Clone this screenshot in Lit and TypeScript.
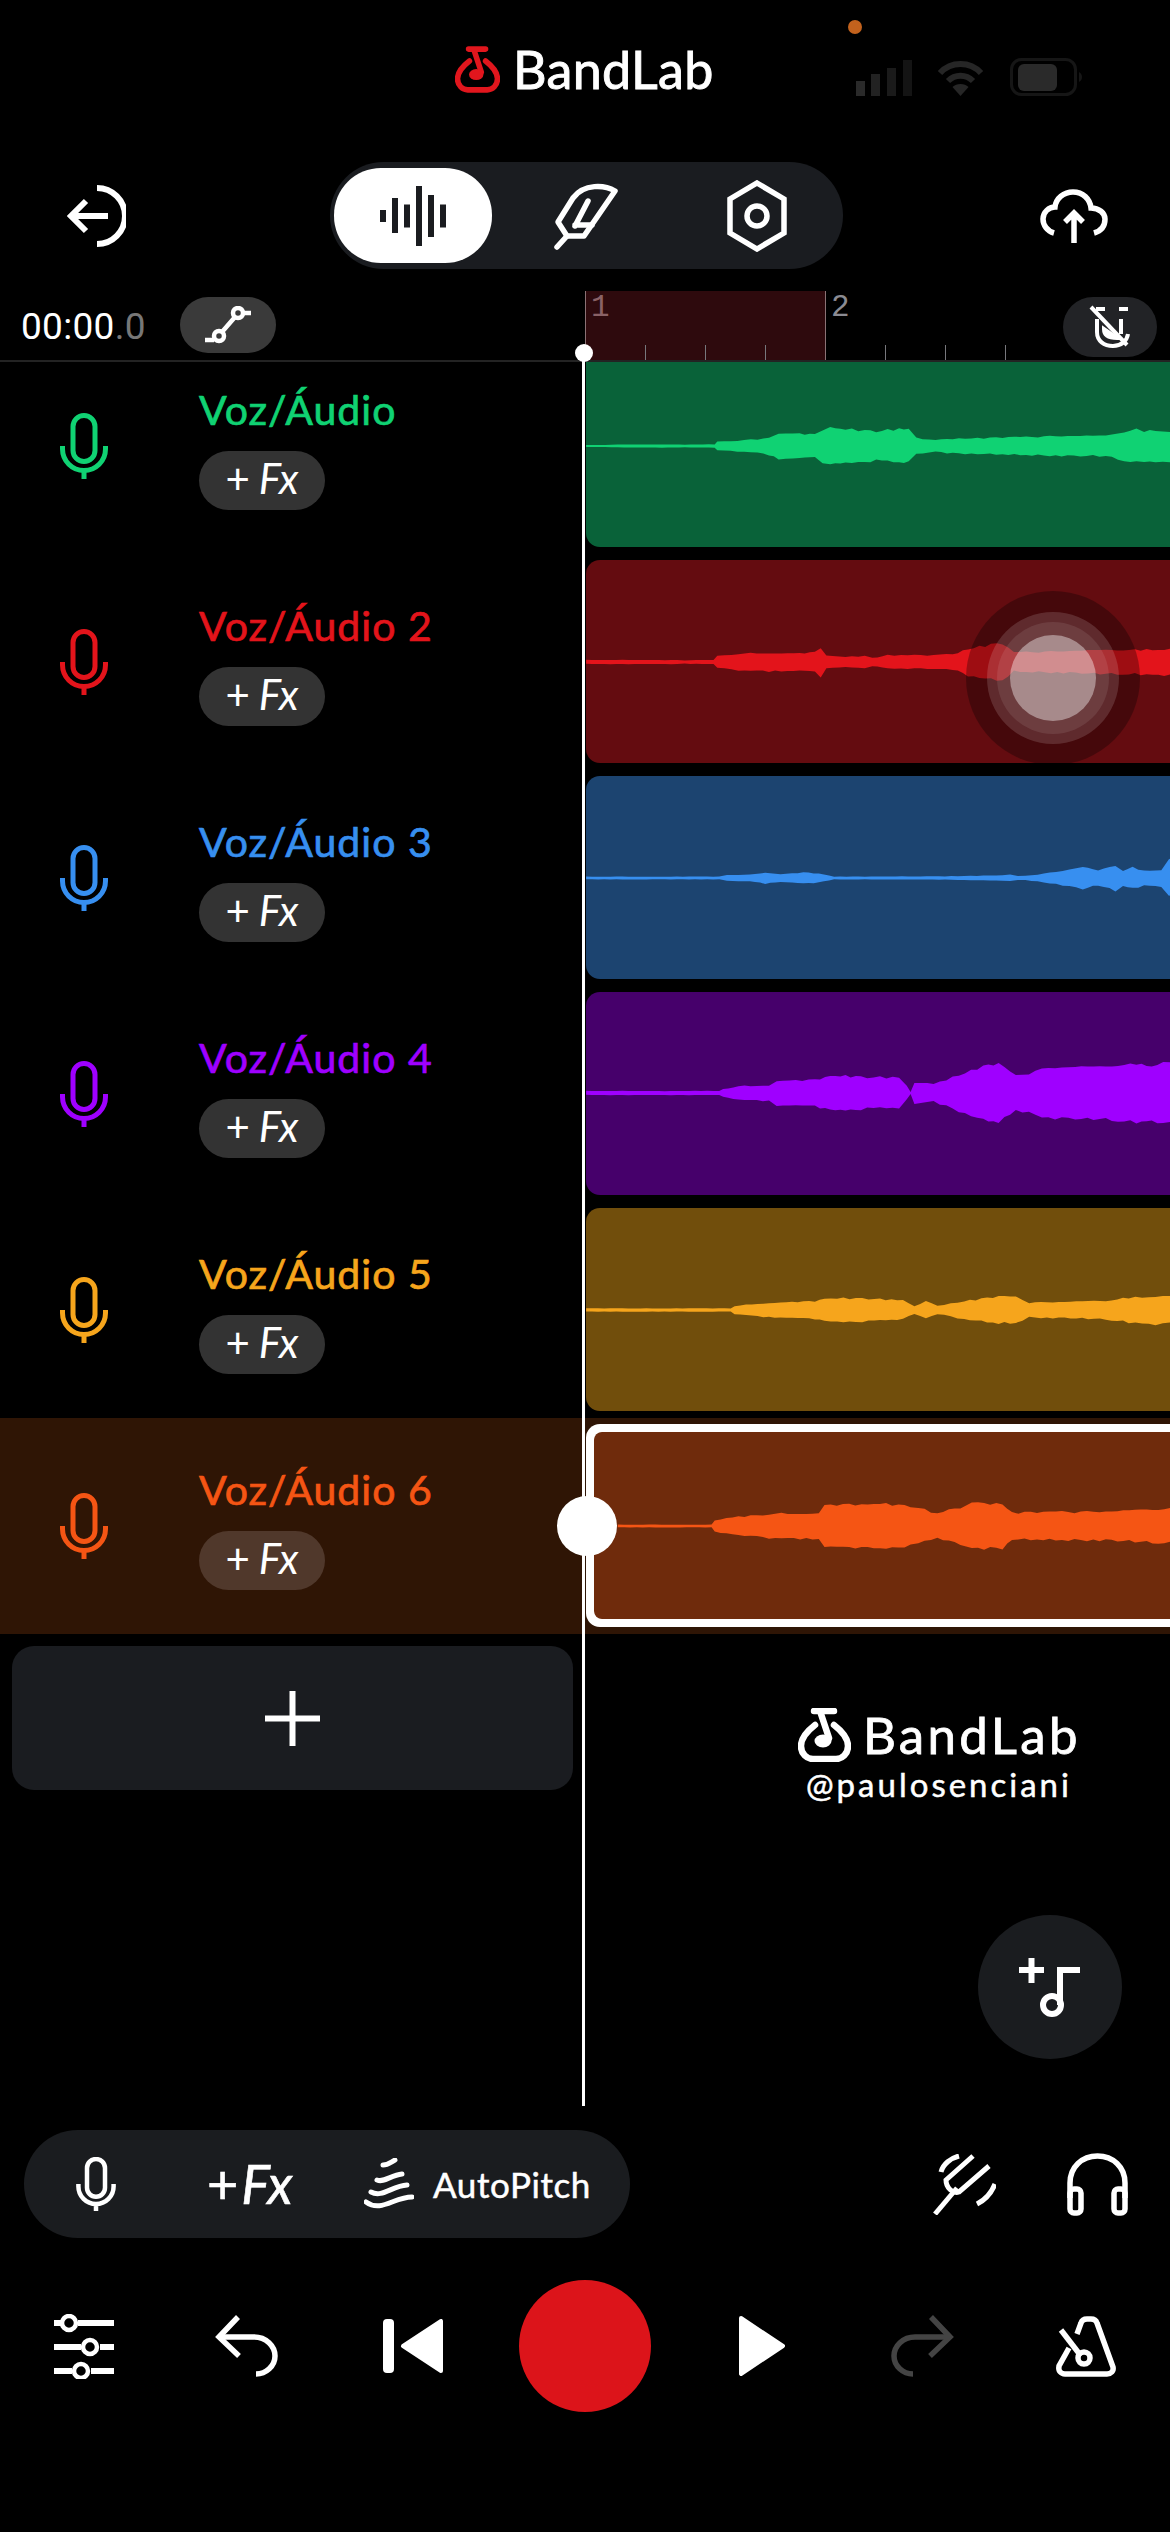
import { LitElement, html, css } from "lit";
import { customElement } from "lit/decorators.js";

type Pt = [number, number];
interface Track {
  name: string;
  color: string;
  clip: string;
  cy: number;
  pts: Pt[];
}

const TRACKS: Track[] = [
  {
    name: "Voz/Áudio", color: "#10d273", clip: "#096239", cy: 102,
    pts: [[42,3],[240,5],[300,4],[378,5],[385,13],[420,15],[490,20],[520,27],[545,40],[600,38],[640,35],[660,50],[680,58],[720,50],[770,46],[800,44],[860,50],[885,48],[905,25],[955,17],[1000,22],[1130,25],[1300,30],[1400,30],[1480,50],[1500,45],[1530,48],[1568,45]],
  },
  {
    name: "Voz/Áudio 2", color: "#e3141b", clip: "#640c10", cy: 102,
    pts: [[42,6],[280,6],[300,5],[375,6],[385,18],[440,25],[520,28],[600,27],[640,30],[655,45],[670,20],[720,15],[770,18],[790,12],[830,20],[900,20],[1000,22],[1040,40],[1100,52],[1130,55],[1160,28],[1370,35],[1430,35],[1568,39]],
  },
  {
    name: "Voz/Áudio 3", color: "#378ff0", clip: "#1c4470", cy: 102,
    pts: [[42,4],[390,4],[410,9],[470,10],[510,17],[550,12],[610,17],[650,14],[690,4],[980,5],[1130,8],[1150,10],[1170,6],[1190,6],[1270,18],[1340,33],[1380,22],[1425,37],[1445,22],[1470,32],[1500,22],[1545,25],[1565,55],[1568,55]],
  },
  {
    name: "Voz/Áudio 4", color: "#9f00ff", clip: "#46006b", cy: 101,
    pts: [[42,6],[390,6],[400,12],[440,20],[520,24],[540,38],[640,40],[680,53],[720,50],[760,48],[860,45],[880,20],[890,3],[900,33],[950,25],[1000,48],[1080,80],[1120,88],[1165,50],[1250,75],[1320,78],[1400,78],[1480,88],[1520,82],[1550,92],[1568,90]],
  },
  {
    name: "Voz/Áudio 5", color: "#f6a51c", clip: "#714e0c", cy: 102,
    pts: [[42,5],[420,5],[430,12],[520,22],[640,27],[665,35],[780,34],[870,28],[900,12],[930,25],[960,12],[1030,27],[1120,40],[1165,38],[1200,22],[1400,27],[1460,37],[1530,42],[1568,40]],
  },
  {
    name: "Voz/Áudio 6", color: "#f55514", clip: "#6f2b0c", cy: 94,
    pts: [[125,4],[370,4],[378,17],[440,27],[520,36],[650,40],[665,64],[810,67],[890,59],[910,54],[960,36],[1050,67],[1130,67],[1155,40],[1400,43],[1568,51]],
  },
];

function wobble(n: number): number {
  const v = Math.sin(n * 12.9898) * 43758.5453;
  return (v - Math.floor(v)) * 2 - 1;
}

/* Densify the outline and add a small, repeatable roughness to the envelope. */
function wavePoints(pts: Pt[], left: number, cy: number): string {
  const top: string[] = [];
  const bottom: string[] = [];
  let n = 0;
  for (let i = 0; i < pts.length; i++) {
    const [x0, h0] = pts[i];
    const next = pts[i + 1];
    const steps = next ? Math.max(1, Math.round((next[0] - x0) / 16)) : 1;
    for (let s = 0; s < steps; s++) {
      const t = s / steps;
      const zx = next ? x0 + (next[0] - x0) * t : x0;
      const zh = next ? h0 + (next[1] - h0) * t : h0;
      const h = zh / 3;
      const amp = Math.min(1.4, h * 0.09);
      const x = (570 + zx / 2.613 - left).toFixed(1);
      top.push(`${x},${(cy - h - wobble(++n) * amp).toFixed(1)}`);
      bottom.unshift(`${x},${(cy + h + wobble(++n) * amp).toFixed(1)}`);
    }
  }
  return [...top, ...bottom].join(" ");
}

const mic = () => html`<svg class="mic" viewBox="0 0 48 66" fill="none" stroke="currentColor" stroke-width="5">
  <rect x="13" y="2.5" width="22" height="46" rx="11"></rect>
  <path d="M2.5 33v3a21.5 21.5 0 0 0 43 0v-3M24 58v8"></path>
</svg>`;

const logo = (cls: string) => html`<svg class=${cls} viewBox="0 0 53 54" fill="none" stroke="currentColor" stroke-width="6.500" stroke-linecap="round">
  <path d="M17 17C8 24 3 32 3 38c0 8 6 13 12 13h23c6 0 12-5 12-13 0-6-5-14-14-21"></path>
  <path d="M16 3h20M22 3l9 27"></path>
  <ellipse cx="25" cy="33" rx="8.500" ry="6.500" fill="currentColor" stroke="none"></ellipse>
</svg>`;

@customElement("app-root")
export class AppRoot extends LitElement {
  static styles = css`
    :host {
      display: block;
      width: 1170px;
      height: 2532px;
      background: #000;
      color: #fff;
      overflow: hidden;
      font-family: "Lato", "Liberation Sans", sans-serif;
    }
    svg { display: block; flex: none; }

    .status { height: 162px; display: flex; position: relative; padding: 46px 0 0 455px; box-sizing: border-box; }
    .dot { position: absolute; left: 848px; top: 20px; width: 14px; height: 14px; border-radius: 50%; background: #c2621d; }
    .brand { display: flex; gap: 13px; align-items: flex-start; }
    .brand-mark { width: 45px; height: 47px; color: #e1161d; }
    .brand-text { font-size: 52px; line-height: 46px; letter-spacing: 0.3px; -webkit-text-stroke: 0.9px #fff; }
    .sys { margin-left: auto; padding: 12px 88px 0 0; display: flex; align-items: flex-end; height: 38px; }
    .signal { width: 57px; height: 36px; }
    .wifi { width: 47px; height: 36px; margin-left: 24px; }
    .battery { width: 72px; height: 38px; margin-left: 26px; }

    .toolbar { display: grid; grid-template-columns: 330px 513px 1fr; height: 107px; align-items: center; }
    .back { width: 60px; height: 62px; margin-left: 66px; }
    .cloud { width: 68px; height: 54px; margin-left: 197px; }
    .segment { display: grid; grid-template-columns: 158px 188px 154px; padding: 6px 0 0 4px; box-sizing: border-box; height: 107px; background: #1a1c20; border-radius: 54px; }
    .seg { height: 95px; display: flex; align-items: center; justify-content: center; border-radius: 47px; }
    .seg.on { background: #fff; color: #1a1c20; }
    .bars { width: 66px; height: 60px; }
    .feather { width: 70px; height: 70px; margin-left: 3px; }
    .hex { width: 62px; height: 72px; }

    .timeline { position: relative; margin-top: 22px; }
    .head { height: 71px; display: grid; grid-template-columns: 585px 1fr; border-bottom: 2px solid #232323; box-sizing: border-box; }
    .clock { display: flex; align-items: flex-start; padding-left: 21px; }
    .time { font-family: "Roboto", sans-serif; font-weight: 400; font-size: 37px; line-height: 36px; margin-top: 18px; width: 159px; letter-spacing: 0.3px; }
    .time span { color: #777; }
    .pill-btn { width: 96px; height: 56px; margin-top: 6px; border-radius: 28px; background: #3a3a3a; display: flex; align-items: center; justify-content: center; }
    .auto { width: 46px; height: 38px; }
    .ruler { display: flex; position: relative; }
    .bar { width: 240px; display: flex; position: relative; }
    .bar.sel { background: #2e0a0d; }
    .bar-n { position: absolute; left: 6px; top: 0; font-family: "Liberation Mono", monospace; font-size: 31px; line-height: 34px; color: #8b8b92; }
    .bar.sel .bar-n { color: #8a6266; }
    .beat { width: 60px; height: 69px; display: flex; flex-direction: column; justify-content: flex-end; }
    .tick { width: 1px; height: 15px; background: #77777c; }
    .beat.first .tick { height: 69px; background: #8a7275; }
    .magnet { position: absolute; right: 13px; top: 6px; width: 94px; height: 60px; border-radius: 30px; background: #222326; display: flex; align-items: center; justify-content: center; }
    .magnet svg { width: 42px; height: 44px; }

    .playhead { position: absolute; left: 582px; top: 62px; bottom: 0; width: 3px; background: #fff; z-index: 2; }
    .playhead i { position: absolute; left: -7.5px; top: -9px; width: 18px; height: 18px; border-radius: 50%; background: #fff; }

    .tracks { height: 1744px; overflow: hidden; }
    .list { margin-top: -24px; }
    .row { display: grid; grid-template-columns: 586px 1fr; height: 216px; position: relative; }
    .row.sel { background: #2f1505; }
    .info { display: flex; padding-left: 60px; }
    .mic { width: 48px; height: 66px; margin-top: 75px; }
    .meta { margin-left: 91px; padding-top: 48px; }
    .name { font-size: 41px; line-height: 48px; letter-spacing: 1px; white-space: nowrap; -webkit-text-stroke: 0.7px currentColor; }
    .fx { margin-top: 17px; width: 126px; height: 59px; border-radius: 30px; background: #333; display: flex; align-items: center; justify-content: center; font-size: 42px; line-height: 54px; color: #fff; gap: 9px; padding-bottom: 5px; box-sizing: border-box; }
    .row.sel .fx { background: #50382b; }
    .fx em { font-style: italic; }
    .lane { padding-top: 6px; min-width: 0; }
    .clip { width: 604px; height: 203px; border-radius: 14px 0 0 14px; overflow: hidden; }
    .row.sel .clip { border: solid #fff; border-width: 8px 0 8px 8px; box-sizing: border-box; background: #fff; }
    .row.sel .clip svg { border-radius: 8px 0 0 8px; }
    .touch { position: absolute; left: 966px; top: 37px; width: 174px; height: 174px; border-radius: 50%; background: rgba(0,0,0,.3); display: flex; align-items: center; justify-content: center; }
    .touch div { border-radius: 50%; display: flex; align-items: center; justify-content: center; }
    .t2 { width: 132px; height: 132px; background: rgba(255,255,255,.14); }
    .t3 { width: 112px; height: 112px; background: rgba(255,255,255,.09); }
    .t4 { width: 86px; height: 86px; background: rgba(255,255,255,.4); }
    .handle { position: absolute; left: 557px; top: 78px; width: 60px; height: 60px; border-radius: 50%; background: #fff; z-index: 3; }

    .below { display: grid; grid-template-columns: 586px 1fr; }
    .add-col { padding: 12px 0 0 12px; }
    .add { width: 561px; height: 144px; border-radius: 22px; background: #1a1c20; display: flex; align-items: center; justify-content: center; }
    .add svg { width: 55px; height: 55px; }
    .extras { display: flex; flex-direction: column; }
    .mark { margin: 74px 0 0 212px; display: flex; gap: 12px; align-items: center; height: 54px; }
    .mark-icon { width: 53px; height: 54px; color: #fff; }
    .mark-text { font-size: 51px; line-height: 54px; letter-spacing: 3.3px; -webkit-text-stroke: 0.8px #fff; }
    .handle-name { margin: 1px 0 0 220px; font-size: 33px; line-height: 42px; letter-spacing: 3px; -webkit-text-stroke: 0.5px #fff; }
    .fab { margin: 110px 0 0 392px; width: 144px; height: 144px; border-radius: 50%; background: #1a1c1f; display: flex; align-items: center; justify-content: center; }
    .fab svg { width: 62px; height: 60px; }

    .tools { margin-top: 24px; height: 108px; display: flex; align-items: center; padding: 0 42px 0 24px; }
    .pill { width: 606px; height: 108px; border-radius: 54px; background: #1a1c1f; display: flex; align-items: center; padding-left: 52px; box-sizing: border-box; }
    .pill-mic { width: 40px; height: 54px; }
    .pfx { margin-left: 91px; width: 85px; font-size: 54px; line-height: 1; display: flex; align-items: center; gap: 3px; white-space: nowrap; -webkit-text-stroke: 0.6px #fff; }
    .pfx em { font-style: italic; }
    .wavy { width: 50px; height: 52px; margin-left: 72px; }
    .ap { margin-left: 19px; font-size: 35px; letter-spacing: 0.6px; -webkit-text-stroke: 0.5px #fff; }
    .fork { width: 63px; height: 61px; margin-left: auto; }
    .phones { width: 61px; height: 63px; margin-left: 71px; }

    .transport { margin-top: 42px; display: grid; grid-template-columns: repeat(7, 1fr); justify-items: center; align-items: center; height: 132px; }
    .sliders { width: 60px; height: 65px; }
    .undo { width: 66px; height: 62px; margin-right: 8px; }
    .skip { width: 60px; height: 54px; margin-right: 9px; }
    .rec { width: 132px; height: 132px; border-radius: 50%; background: #dc141a; }
    .play { width: 46px; height: 60px; margin-left: 19px; }
    .redo { width: 66px; height: 62px; margin-left: 6px; transform: scaleX(-1); color: #444; }
    .metro { width: 62px; height: 61px; }
  `;

  private renderTrack(t: Track, i: number) {
    const sel = i === 5;
    const left = sel ? 594 : 586;
    const w = 1190 - left;
    const h = sel ? 187 : 203;
    return html`<div class="row ${sel ? "sel" : ""}">
      <div class="info" style="color:${t.color}">
        ${mic()}
        <div class="meta">
          <div class="name">${t.name}</div>
          <div class="fx"><span>+</span><em>Fx</em></div>
        </div>
      </div>
      <div class="lane">
        <div class="clip">
          <svg width=${w} height=${h} viewBox="0 0 ${w} ${h}">
            <rect width=${w} height=${h} fill=${t.clip}></rect>
            <polygon points=${wavePoints(t.pts, left, t.cy)} fill=${t.color}></polygon>
          </svg>
        </div>
      </div>
      ${i === 1
        ? html`<div class="touch"><div class="t2"><div class="t3"><div class="t4"></div></div></div></div>`
        : ""}
      ${sel ? html`<div class="handle"></div>` : ""}
    </div>`;
  }

  render() {
    return html`
      <div class="status">
        <div class="dot"></div>
        <div class="brand">
          ${logo("brand-mark")}
          <div class="brand-text">BandLab</div>
        </div>
        <div class="sys">
          <svg class="signal" viewBox="0 0 57 36">
            <rect x="0" y="21" width="9" height="15" fill="#2a2a2a"></rect>
            <rect x="15" y="14" width="9" height="22" fill="#222"></rect>
            <rect x="31" y="8" width="9" height="28" fill="#1a1a1a"></rect>
            <rect x="47" y="0" width="9" height="36" fill="#141414"></rect>
          </svg>
          <svg class="wifi" viewBox="0 0 47 36" fill="none" stroke="#262626" stroke-width="6">
            <path d="M3 13C14 1 33 1 44 13"></path>
            <path d="M11 21c7-7 18-7 25 0"></path>
            <path d="M23.500 36l-8-9c4-4 12-4 16 0z" fill="#262626" stroke="none"></path>
          </svg>
          <svg class="battery" viewBox="0 0 72 38" fill="none">
            <rect x="1.500" y="1.500" width="64" height="35" rx="10" stroke="#161616" stroke-width="3"></rect>
            <rect x="8" y="6" width="39" height="27" rx="6" fill="#2a2a2a"></rect>
            <path d="M69 14c2 1 3 3 3 5s-1 4-3 5z" fill="#161616"></path>
          </svg>
        </div>
      </div>

      <div class="toolbar">
        <svg class="back" viewBox="0 0 60 62" fill="none" stroke="#fff" stroke-width="6">
          <path d="M31 3a28 28 0 0 1 0 56"></path>
          <path d="M42 31H6M20 16L5 31l15 15"></path>
        </svg>
        <div class="segment">
          <div class="seg on">
            <svg class="bars" viewBox="0 0 66 60" fill="currentColor">
              <rect x="0" y="24" width="6" height="12"></rect>
              <rect x="12" y="12" width="6" height="35"></rect>
              <rect x="24" y="18.500" width="6" height="23"></rect>
              <rect x="36" y="0" width="6" height="60"></rect>
              <rect x="48" y="9" width="6" height="42"></rect>
              <rect x="60" y="18.500" width="6" height="23"></rect>
            </svg>
          </div>
          <div class="seg">
            <svg class="feather" viewBox="0 0 70 70" fill="none" stroke="#fff" stroke-width="5.500" stroke-linecap="round" stroke-linejoin="round">
              <path d="M62 10C52 4 31 2 20 17L5 41l9 14h17z"></path>
              <path d="M14 55L4 66M35 20L22 45M22 44h17"></path>
            </svg>
          </div>
          <div class="seg">
            <svg class="hex" viewBox="0 0 62 72" fill="none" stroke="#fff" stroke-width="5.500">
              <path d="M31 3l27 16v34L31 69 4 53V19z"></path>
              <circle cx="31" cy="36" r="10"></circle>
            </svg>
          </div>
        </div>
        <svg class="cloud" viewBox="0 0 68 54" fill="none" stroke="#fff" stroke-width="5.500">
          <path d="M14 44C7 42 3 36 3 30c0-7 6-12 12-12C16 9 24 3 33 3c10 0 17 7 18 16 8 0 14 5 14 11 0 7-4 12-11 14"></path>
          <path d="M34 54V24M25 33l9-9 9 9"></path>
        </svg>
      </div>

      <div class="timeline">
        <div class="head">
          <div class="clock">
            <div class="time">00:00<span>.0</span></div>
            <div class="pill-btn">
              <svg class="auto" viewBox="0 0 46 38" fill="none" stroke="#fff" stroke-width="4.500">
                <circle cx="33" cy="7" r="5"></circle>
                <circle cx="14" cy="30" r="5"></circle>
                <path d="M17 26L30 11M0 34h9M38 7h8"></path>
              </svg>
            </div>
          </div>
          <div class="ruler">
            ${[1, 2].map(
              (n) => html`<div class="bar ${n === 1 ? "sel" : ""}">
                <span class="bar-n">${n}</span>
                ${[0, 1, 2, 3].map(
                  (b) => html`<div class="beat ${b === 0 ? "first" : ""}"><div class="tick"></div></div>`
                )}
              </div>`
            )}
            <div class="magnet">
              <svg viewBox="0 0 42 44" fill="none" stroke="#fff" stroke-width="4">
                <path d="M2 2l36 38"></path>
                <path d="M8 14v13c0 9 7 14 16 14 8 0 14-5 15-12"></path>
                <path d="M32 14v15M15 24c0 6 5 9 13 9z"></path>
                <path d="M7 4h9M30 4h9"></path>
              </svg>
            </div>
          </div>
        </div>
        <div class="playhead"><i></i></div>
        <div class="tracks">
          <div class="list">
            ${TRACKS.map((t, i) => this.renderTrack(t, i))}
            <div class="below">
              <div class="add-col">
                <div class="add">
                  <svg viewBox="0 0 55 55" stroke="#fff" stroke-width="6"><path d="M0 27.500h55M27.500 0v55"></path></svg>
                </div>
              </div>
              <div class="extras">
                <div class="mark">
                  ${logo("mark-icon")}
                  <div class="mark-text">BandLab</div>
                </div>
                <div class="handle-name">@paulosenciani</div>
                <div class="fab">
                  <svg viewBox="0 0 62 60" fill="none" stroke="#fff" stroke-width="6">
                    <path d="M0 13h25M12.500 1v25"></path>
                    <path d="M61 13H41v35"></path>
                    <circle cx="33" cy="48" r="9"></circle>
                  </svg>
                </div>
              </div>
            </div>
          </div>
        </div>
      </div>

      <div class="tools">
        <div class="pill">
          <svg class="pill-mic" viewBox="0 0 48 66" fill="none" stroke="#fff" stroke-width="5.500">
            <rect x="13" y="2.500" width="22" height="46" rx="11"></rect>
            <path d="M2.500 33v3a21.500 21.500 0 0 0 43 0v-3M24 58v8"></path>
          </svg>
          <div class="pfx"><span>+</span><em>Fx</em></div>
          <svg class="wavy" viewBox="0 0 50 52" fill="none" stroke="#fff" stroke-width="5" stroke-linecap="round">
            <path d="M19 7c5 0 8-3 12-5"></path>
            <path d="M13 22c7 3 14-5 25-6"></path>
            <path d="M7 34c11 6 21-6 36-7"></path>
            <path d="M2 44c15 11 28-5 46-5"></path>
          </svg>
          <div class="ap">AutoPitch</div>
        </div>
        <svg class="fork" viewBox="0 0 63 61" fill="none" stroke="#fff" stroke-width="5">
          <path d="M2 60l22-26"></path>
          <path d="M40 2L13 26c0 8 7 14 13 12L56 12"></path>
          <path d="M8 18c2-8 10-14 18-16"></path>
          <path d="M44 50c8-4 14-10 18-20"></path>
        </svg>
        <svg class="phones" viewBox="0 0 61 63" fill="none" stroke="#fff" stroke-width="5.500">
          <path d="M3 45V30C3 14 15 3 30.500 3S58 14 58 30v15"></path>
          <rect x="3" y="36" width="11" height="24" rx="4"></rect>
          <rect x="47" y="36" width="11" height="24" rx="4"></rect>
        </svg>
      </div>

      <div class="transport">
        <svg class="sliders" viewBox="0 0 60 65" fill="none" stroke="#fff" stroke-width="6">
          <path d="M0 9h7M24 9h36M0 33h27M46 33h14M0 57h18M37 57h23"></path>
          <g stroke-width="4.500">
            <circle cx="15" cy="9" r="7"></circle>
            <circle cx="36" cy="33" r="7"></circle>
            <circle cx="27" cy="57" r="7"></circle>
          </g>
        </svg>
        <svg class="undo" viewBox="0 0 66 62" fill="none" stroke="#fff" stroke-width="5.500">
          <path d="M24 2L5 22l20 19"></path>
          <path d="M5 22h35c12 0 21 9 21 19s-9 18-19 18"></path>
        </svg>
        <svg class="skip" viewBox="0 0 60 54" fill="#fff" stroke="#fff" stroke-linejoin="round">
          <rect x="0" y="0" width="11" height="54" rx="4" stroke="none"></rect>
          <path d="M20 27L58 2v50z" stroke-width="4"></path>
        </svg>
        <div class="rec"></div>
        <svg class="play" viewBox="0 0 46 60" fill="#fff" stroke="#fff" stroke-width="4" stroke-linejoin="round">
          <path d="M2 2l42 28L2 58z"></path>
        </svg>
        <svg class="redo" viewBox="0 0 66 62" fill="none" stroke="currentColor" stroke-width="5.500">
          <path d="M24 2L5 22l20 19"></path>
          <path d="M5 22h35c12 0 21 9 21 19s-9 18-19 18"></path>
        </svg>
        <svg class="metro" viewBox="0 0 62 61" fill="none" stroke="#fff" stroke-width="5.500">
          <path d="M14 32L4 50c-1 5 2 8 6 8h42c4 0 7-3 6-7L42 7c-1-3-3-4-6-4h-4c-3 0-5 1-6 4l-4 11"></path>
          <path d="M6 14l20 26"></path>
          <circle cx="29" cy="42" r="6"></circle>
        </svg>
      </div>
    `;
  }
}
